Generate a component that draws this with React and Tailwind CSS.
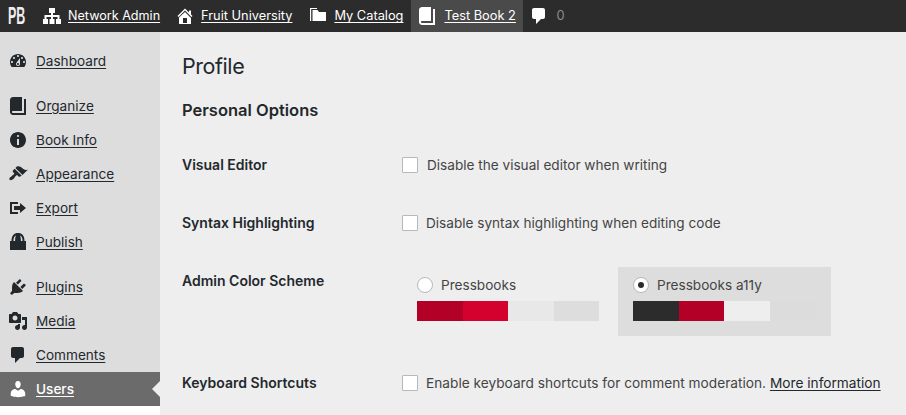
const ICONS = {
  dashboard: 'M3.76 16h12.48c1.1-1.37 1.76-3.11 1.76-5 0-4.42-3.58-8-8-8s-8 3.58-8 8c0 1.89.66 3.63 1.76 5zM10 4c.55 0 1 .45 1 1s-.45 1-1 1-1-.45-1-1 .45-1 1-1zM6 6c.55 0 1 .45 1 1s-.45 1-1 1-1-.45-1-1 .45-1 1-1zm8 0c.55 0 1 .45 1 1s-.45 1-1 1-1-.45-1-1 .45-1 1-1zm-5.37 5.55L12 7v6c0 1.1-.9 2-2 2s-2-.9-2-2c0-.57.24-1.08.63-1.45zM4 10c.55 0 1 .45 1 1s-.45 1-1 1-1-.45-1-1 .45-1 1-1zm12 0c.55 0 1 .45 1 1s-.45 1-1 1-1-.45-1-1 .45-1 1-1zm-5 3c0-.55-.45-1-1-1s-1 .45-1 1 .45 1 1 1 1-.45 1-1z',
  book: 'M16 3h2v16H5c-1.66 0-3-1.34-3-3V4c0-1.66 1.34-3 3-3h9v14H5c-.55 0-1 .45-1 1s.45 1 1 1h11V3z',
  info: 'M10 2c4.42 0 8 3.58 8 8s-3.58 8-8 8-8-3.58-8-8 3.58-8 8-8zm1 4c0-.55-.45-1-1-1s-1 .45-1 1 .45 1 1 1 1-.45 1-1zm0 9V9H9v6h2z',
  appearance: 'M14.48 11.06L7.41 3.99l1.5-1.5c.5-.56 2.3-.47 3.51.32 1.21.8 1.43 1.28 2.91 2.1 1.18.64 2.45 1.26 4.45.85zm-.71.71L6.7 4.7 4.93 6.47c-.39.39-.39 1.02 0 1.41l1.06 1.06c.39.39.39 1.03 0 1.42-.6.6-1.43 1.11-2.21 1.69-.35.26-.7.53-1.01.84C1.43 13.23.91 15 1.7 15.79c.79.79 2.56.27 3.91-1.08.31-.31.58-.66.85-1.01.57-.78 1.08-1.61 1.69-2.21.39-.39 1.02-.39 1.41 0l1.06 1.06c.39.39 1.02.39 1.41 0z',
  exportIcon: 'M4 6h6V4H2v12.01h8V14H4V6zm2 2h6V5l6 5-6 5v-3H6V8z',
  publish: 'M2 18V9h1.5C3.5 3.5 6 1 10 1s6.5 2.5 6.5 8H18v9zM5.4 9h1.7c0-2.4.2-4.2.8-5.6-1.7.8-2.5 2.8-2.5 5.6zM12.9 9h1.7c0-2.8-.8-4.8-2.5-5.6.6 1.4.8 3.2.8 5.6z',
  plugins: 'M13.11 4.36L9.87 7.6 8 5.73l3.24-3.24c.35-.34 1.05-.2 1.56.32.52.51.66 1.21.31 1.55zm-8 1.77l.91-1.12 9.01 9.01-1.19.84c-.71.71-2.63 1.16-3.82 1.16H6.14L4.9 17.26c-.59.59-1.54.59-2.12 0-.59-.58-.59-1.53 0-2.12l1.24-1.24v-3.88c0-1.13.4-3.19 1.09-3.89zm7.26 3.97l3.24-3.24c.34-.35 1.04-.2 1.55.31.52.52.66 1.22.32 1.57l-3.24 3.24z',
  media: 'M13 11V4c0-.55-.45-1-1-1h-1.67L9 1H5L3.67 3H2c-.55 0-1 .45-1 1v7c0 .55.45 1 1 1h10c.55 0 1-.45 1-1zM7 4.5c1.38 0 2.5 1.12 2.5 2.5S8.38 9.5 7 9.5 4.5 8.38 4.5 7 5.62 4.5 7 4.5zM14 6h5v10.5c0 1.38-1.12 2.5-2.5 2.5S14 17.88 14 16.5s1.12-2.5 2.5-2.5c.17 0 .34.02.5.05V9h-3V6zm-4 8.05V13h2v3.5c0 1.38-1.12 2.5-2.5 2.5S7 17.88 7 16.5 8.12 14 9.5 14c.17 0 .34.02.5.05z',
  comment: 'M5 2h9c1.1 0 2 .9 2 2v7c0 1.1-.9 2-2 2h-2l-5 5v-5H5c-1.1 0-2-.9-2-2V4c0-1.1.9-2 2-2z',
  users: 'M10 9.25c-2.27 0-2.73-3.44-2.73-3.44C7 4.02 7.82 2 9.97 2c2.16 0 2.98 2.02 2.71 3.81 0 0-.41 3.44-2.68 3.44zm0 2.57L12.72 10c2.39 0 4.52 2.33 4.52 4.53v2.49s-3.65 1.13-7.24 1.13c-3.65 0-7.24-1.13-7.24-1.13v-2.49c0-2.25 1.94-4.48 4.47-4.48z',
  network: 'M7 2h6v5h-2v2h6.5v4H19v5h-5v-5h1.5v-2H11v2h1.5v5h-5v-5H9v-2H4.5v2H6v5H1v-5h1.5V9H9V7H7z',
  home: 'M16 8.5l1.53 1.53-1.06 1.06L10 4.62l-6.47 6.47-1.06-1.06L10 2.5l4 4v-2h2v4zm-6-2.46l6 5.99V18H4v-6.47zM12 17v-5H8v5h4z',
  catalog: 'M2 2h7v1H3.2v12H2zM4.5 4h5l1.5 2h7v9H4.5z',
};

function Icon({ name, className }) {
  return (
    <svg viewBox="0 0 20 20" className={className} fill="currentColor" fillRule="evenodd">
      <path d={ICONS[name]} />
    </svg>
  );
}

const MENU = [
  [{ label: 'Dashboard', icon: 'dashboard' }],
  [
    { label: 'Organize', icon: 'book' },
    { label: 'Book Info', icon: 'info' },
    { label: 'Appearance', icon: 'appearance' },
    { label: 'Export', icon: 'exportIcon' },
    { label: 'Publish', icon: 'publish' },
  ],
  [
    { label: 'Plugins', icon: 'plugins' },
    { label: 'Media', icon: 'media' },
    { label: 'Comments', icon: 'comment' },
    { label: 'Users', icon: 'users', current: true },
  ],
];

const TOPBAR = [
  { label: 'Network Admin', icon: 'network', pad: 'pl-[9px] pr-[15px] text-[12.6px]' },
  { label: 'Fruit University', icon: 'home', pad: 'pr-[16px]' },
  { label: 'My Catalog', icon: 'catalog', pad: 'pr-[8px]' },
];

const Checkbox = () => (
  <span className="w-4 h-4 shrink-0 bg-white border border-[#b4b9be] rounded-[1px]" />
);

function Row({ label, children }) {
  return (
    <div className="grid grid-cols-[220px_1fr] py-5 leading-[18px]">
      <div className="text-sm/[18px] font-semibold text-[#23282d]">{label}</div>
      <div>{children}</div>
    </div>
  );
}

function Scheme({ name, colors, selected }) {
  return (
    <div className={`w-[213px] h-[69px] px-[15px] pt-[10px] ${selected ? 'bg-[#dddddd]' : ''}`}>
      <div className="flex items-center gap-[8px] h-4 text-[#444444]">
        <span className="w-4 h-4 rounded-full bg-white border border-[#b4b9be] flex items-center justify-center">
          {selected && <span className="w-[6px] h-[6px] rounded-full bg-[#2c2c2c]" />}
        </span>
        {name}
      </div>
      <div className="flex w-[182px] h-5 mt-2">
        {colors.map((c) => (
          <span key={c} className={`flex-1 ${c}`} />
        ))}
      </div>
    </div>
  );
}

export default function App() {
  return (
    <div className="h-[415px] overflow-hidden bg-[#eeeeee] font-['Inter',sans-serif] text-[13.6px]">
      <header className="h-8 bg-[#2c2c2c] flex items-center text-white text-[12.8px]">
        <div className="w-[33px] flex justify-center">
          <span className="font-['Liberation_Sans',sans-serif] font-bold text-[24px] leading-8 scale-x-[0.52] text-[#eeeeee]">PB</span>
        </div>
        {TOPBAR.map((t) => (
          <a key={t.label} className={`flex items-center gap-[6px] h-8 ${t.pad}`}>
            <Icon name={t.icon} className="w-5 h-5" />
            <span className="underline underline-offset-2">{t.label}</span>
          </a>
        ))}
        <a className="flex items-center gap-[7px] h-8 w-[112px] pl-[6px] bg-[#4a4a4a]">
          <Icon name="book" className="w-5 h-5" />
          <span className="underline underline-offset-2">Test Book 2</span>
        </a>
        <div className="flex items-center gap-[7px] pl-[6px]">
          <Icon name="comment" className="w-5 h-5" />
          <span className="text-[#8c8c8c]">0</span>
        </div>
      </header>

      <div className="flex">
        <nav className="w-40 shrink-0 h-[383px] bg-white">
          <div className="bg-[#dddddd] pt-3 flex flex-col gap-[11px] text-[#23282d]">
            {MENU.map((group, i) => (
              <ul key={i}>
                {group.map((item) => (
                  <li
                    key={item.label}
                    className={`relative h-[34px] flex items-center gap-2 pl-2 ${item.current ? 'bg-[#6b6b6b] text-white font-medium' : ''}`}
                  >
                    <Icon name={item.icon} className="w-5 h-5" />
                    <span className="underline underline-offset-2">{item.label}</span>
                    {item.current && (
                      <span className="absolute right-0 top-[9px] border-y-[8px] border-r-[8px] border-y-transparent border-r-[#eeeeee]" />
                    )}
                  </li>
                ))}
              </ul>
            ))}
          </div>
        </nav>

        <main className="flex-1 pl-[22px] pt-5 text-[#444444]">
          <h1 className="text-[21.5px] leading-7 tracking-[-0.43px] text-[#23282d]">Profile</h1>
          <h2 className="mt-[18px] mb-[14px] text-[16.5px] leading-6 font-semibold text-[#23282d]">Personal Options</h2>

          <Row label="Visual Editor">
            <label className="flex items-center gap-[9px]">
              <Checkbox />
              Disable the visual editor when writing
            </label>
          </Row>
          <Row label="Syntax Highlighting">
            <label className="flex items-center gap-2">
              <Checkbox />
              Disable syntax highlighting when editing code
            </label>
          </Row>
          <div className="grid grid-cols-[220px_1fr] leading-[18px] pb-[15px]">
            <div className="pt-5 text-sm/[18px] font-semibold text-[#23282d]">Admin Color Scheme</div>
            <div className="pt-[15px] flex gap-[3px]">
              <Scheme name="Pressbooks" colors={['bg-[#b30027]', 'bg-[#d4002d]', 'bg-[#e8e8e8]', 'bg-[#dddddd]']} />
              <Scheme name="Pressbooks a11y" selected colors={['bg-[#2c2c2c]', 'bg-[#b30027]', 'bg-[#eeeeee]', 'bg-[#dcdcdc]']} />
            </div>
          </div>
          <div className="mt-[3px]">
            <Row label="Keyboard Shortcuts">
              <label className="flex items-center gap-2 whitespace-nowrap text-[13.7px]">
                <Checkbox />
                <span>
                  Enable keyboard shortcuts for comment moderation.{' '}
                  <a className="text-[#23282d] underline underline-offset-2">More information</a>
                </span>
              </label>
            </Row>
          </div>
        </main>
      </div>
    </div>
  );
}
